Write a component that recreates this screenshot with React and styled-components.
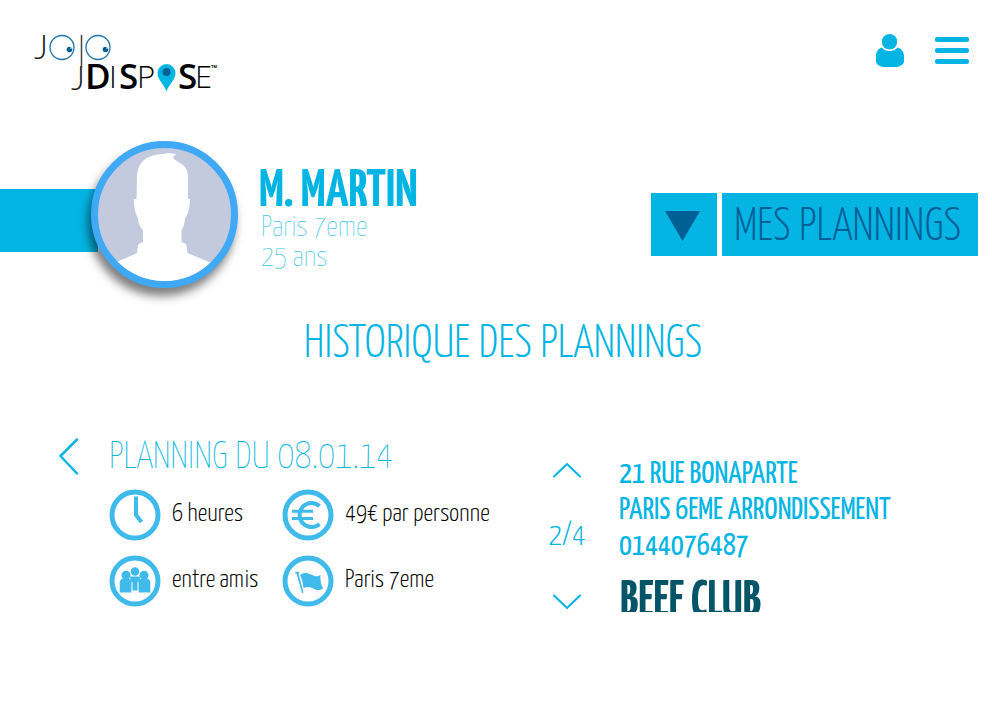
import React from 'react';
import styled, { createGlobalStyle } from 'styled-components';

const cyan = '#04b5e4';
const navy = '#005f95';
const iconBlue = '#40baeb';

const GlobalStyle = createGlobalStyle`
  *, *::before, *::after { box-sizing: border-box; }
  body {
    margin: 0;
    background: #fff;
    color: ${cyan};
    font-family: 'Yanone Kaffeesatz', 'Open Sans Condensed', 'Roboto Condensed', sans-serif;
    font-variant-numeric: oldstyle-nums;
  }
  h1, h2, h3, p, ul { margin: 0; padding: 0; }
  button { border: 0; padding: 0; background: none; font: inherit; color: inherit; cursor: pointer; }
  svg { display: block; }
`;

const Page = styled.div`
  min-height: 100vh;
  overflow: hidden;
`;

const Header = styled.header`
  display: flex;
  justify-content: space-between;
  align-items: flex-start;
  padding: 20px 23px 33px 28px;
`;

const HomeLink = styled.a`
  display: block;
`;

const Actions = styled.nav`
  display: flex;
  gap: 31px;
  padding-top: 14px;
`;

const IconButton = styled.button`
  display: grid;
  place-items: center;
`;

const Profile = styled.section`
  display: flex;
  align-items: center;
`;

const Ribbon = styled.div`
  width: 98px;
  height: 63px;
  margin-top: 12px;
  background: ${cyan};
`;

const Avatar = styled.div`
  flex: none;
  width: 147px;
  height: 147px;
  margin-left: -7px;
  border: 7px solid #3fa9f5;
  border-radius: 50%;
  overflow: hidden;
  background: #c4cade;
`;

const AvatarShadow = styled.div`
  display: flex;
  align-items: center;
  filter: drop-shadow(-3px 8px 5px rgba(0, 0, 0, 0.5));
`;

const Identity = styled.div`
  flex: 1;
  margin-left: 21px;
  padding-top: 14px;
`;

const Name = styled.h1`
  font-size: 52px;
  font-weight: 700;
  line-height: 44px;
`;

const Detail = styled.p`
  padding-left: 2px;
  color: #3cc6ea;
  font-size: 29px;
  font-weight: 200;
  line-height: 30px;
`;

const MenuPicker = styled.div`
  display: flex;
  gap: 5px;
  margin: 20px 14px 0 0;
`;

const PickerButton = styled.button`
  display: grid;
  place-items: center;
  height: 63px;
  padding: ${(p) => (p.$icon ? '2px 16px 0 14px' : '4px 17px 0 12px')};
  background: ${cyan};
  color: ${navy};
  font-size: 47px;
  font-weight: 300;
  line-height: 58px;
  white-space: nowrap;
`;

const Title = styled.h2`
  margin-top: 31px;
  padding-left: 14px;
  font-size: 47px;
  font-weight: 300;
  line-height: 50px;
  text-align: center;
`;

const Board = styled.main`
  display: grid;
  grid-template-columns: 490px 1fr;
  padding: 62px 58px 0;
`;

const Planning = styled.section`
  display: grid;
  grid-template-columns: 51px 1fr;
`;

const PreviousButton = styled.button`
  align-self: start;
  margin-top: 7px;
`;

const PlanningTitle = styled.h3`
  padding-top: 3px;
  font-size: 38px;
  font-weight: 200;
  line-height: 48px;
`;

const Facts = styled.ul`
  display: grid;
  grid-template-columns: 173px 1fr;
  row-gap: 14px;
  margin-top: 7px;
  list-style: none;
`;

const Fact = styled.li`
  display: flex;
  align-items: center;
  gap: 11px;
  color: #000;
  font-size: 25px;
  font-weight: 300;
  line-height: 52px;
  white-space: nowrap;
`;

const Venues = styled.section`
  display: grid;
  grid-template-columns: 38px 1fr;
  column-gap: 33px;
  margin-top: 26px;
  height: 155px;
`;

const Pager = styled.div`
  display: flex;
  flex-direction: column;
  justify-content: space-between;
  align-items: center;
  padding: 5px 0 2px;
  font-size: 32px;
  font-weight: 300;
  line-height: 34px;
`;

const VenueList = styled.div`
  overflow: hidden;
  white-space: nowrap;
`;

const Address = styled.p`
  font-size: 31px;
  font-weight: 400;
  line-height: 36px;
`;

const VenueName = styled.h3`
  margin-top: 10px;
  padding-left: 1px;
  color: #045568;
  font-size: 51px;
  font-weight: 700;
  line-height: 56px;
`;

function Logo() {
  return (
    <svg width="200" height="88" viewBox="28 20 200 88" role="img" aria-label="JOJO DISPOSE">
      <g fontFamily="Lato, sans-serif" fontWeight="300" fontSize="34" fill="#222">
        <text x="34" y="59">J</text>
        <text x="71" y="90">J</text>
      </g>
      <path d="M81.500 35V68" stroke="#444" strokeWidth="1.500" />
      <g fill="none" stroke="#1c75a8" strokeWidth="1.3">
        <circle cx="62" cy="47.5" r="12" />
        <circle cx="98" cy="47.5" r="12" />
      </g>
      <g fill={navy}>
        <circle cx="69.5" cy="49.5" r="2.8" />
        <circle cx="105.5" cy="49.5" r="2.8" />
      </g>
      <g fill="#fff">
        <circle cx="71" cy="48" r="0.8" />
        <circle cx="107" cy="48" r="0.8" />
      </g>
      <g fontFamily="'Open Sans', sans-serif" fontSize="35" fill="#000">
        <text x="85" y="89" fontWeight="600">D</text>
        <text x="109" y="88" fontWeight="300" fontSize="31">I</text>
        <text x="119" y="89" fontWeight="600">S</text>
        <text x="137" y="88" fontWeight="300" fontSize="31">P</text>
        <text x="178" y="89" fontWeight="600">S</text>
        <text x="195" y="88" fontWeight="300" fontSize="31">E</text>
        <text x="211" y="68" fontWeight="700" fontSize="4">TM</text>
      </g>
      <path d="M166.500 91.500C164 84 157.500 80 157.500 73A9 9 0 0 1 175.500 73C175.500 80 169 84 166.500 91.500Z" fill={cyan} />
      <circle cx="166.500" cy="72" r="4" fill={navy} />
    </svg>
  );
}

function UserIcon() {
  return (
    <svg width="28" height="34" viewBox="0 0 28 34" fill={cyan} aria-hidden="true">
      <circle cx="13.500" cy="7.700" r="7.700" />
      <path d="M6 13.500C9 18.200 18 18.200 21.500 13.500C25.500 14.500 28 18 28 22V27C28 31 23 33 19 33H9C5 33 0 31 0 27V22C0 18 2 14.500 6 13.500Z" />
    </svg>
  );
}

function BarsIcon() {
  return (
    <svg width="34" height="28" viewBox="0 0 34 28" fill={cyan} aria-hidden="true">
      <rect y="0" width="34" height="5" rx="2" />
      <rect y="11" width="34" height="5" rx="2" />
      <rect y="22" width="34" height="5" rx="2" />
    </svg>
  );
}

function Silhouette() {
  return (
    <svg width="133" height="133" viewBox="98 148 133 133" fill="#fff" aria-hidden="true">
      <path d="M137 175Q138 163 147 158Q155 154 163 154L168 153L176 154L173 157L174 159L183 165Q188 169 188 177V199H190C190 207 188 215 185 218Q184.500 226 181.500 230V242L186 244Q187 248 187.500 253L209 262L235 275V290H90V275L117 262Q135 254 137 253Q137 248 138.500 244L143 242V230Q138.500 226 138 218C135 213 134 207 134 199H136.500Z" />
    </svg>
  );
}

function Chevron({ direction }) {
  const shapes = {
    left: { w: 20, h: 38, d: 'M19 1.500L2.500 18L19 35.500', s: 2.5 },
    up: { w: 28, h: 16, d: 'M1 14.500L14 2L27 14.500', s: 2 },
    down: { w: 28, h: 16, d: 'M1 1.500L14 14L27 1.500', s: 2 },
  };
  const { w, h, d, s } = shapes[direction];
  return (
    <svg width={w} height={h} viewBox={`0 0 ${w} ${h}`} fill="none" stroke={cyan} strokeWidth={s} aria-hidden="true">
      <path d={d} strokeLinejoin="round" strokeLinecap="round" />
    </svg>
  );
}

const drawings = {
  clock: <path d="M1-18.500V0L6.500 7" fill="none" stroke={iconBlue} strokeWidth="4" />,
  euro: (
    <g fill="none" stroke={iconBlue}>
      <path d="M11.500-9A12 12 0 1 0 11.500 9" strokeWidth="4" />
      <path d="M-16-3.700H5M-16 3.500H5" strokeWidth="3" />
    </g>
  ),
  friends: (
    <g fill={iconBlue}>
      <circle cx="0" cy="-9.500" r="4.300" />
      <path d="M-5-4.500H5L4 9.500H-3.500Z" />
      <path d="M-15.300 11.500V2Q-15.300-2.500-11-2.500H-8Q-3.500-2.500-3.500 2V11.500ZM15.300 11.500V2Q15.300-2.500 11-2.500H8Q3.500-2.500 3.500 2V11.500Z" />
      <path d="M-3 1V11.500M3 1V11.500" stroke="#fff" strokeWidth="1" />
      <circle cx="-9" cy="-5.700" r="4.500" />
      <circle cx="9" cy="-5.700" r="4.500" />
    </g>
  ),
  flag: (
    <g fill={iconBlue}>
      <path d="M-13-9L-10-9.500L-8.500-8.500L-9.500-7.500L-4.500 11.500L-6 12L-11.500-7.500L-12.500-7.500Z" />
      <path d="M-8-6C-4-9-1-8.500 3-6.500C7-4.500 9-4 12.500-6C12-1 13 4 15 7.500C11 10.500 8 9 4 7C1 5.500-1 5.500-4.500 7C-5 2-6-2-8-6Z" />
    </g>
  ),
};

function FactIcon({ name }) {
  return (
    <svg width="52" height="52" viewBox="-26 -26 52 52" aria-hidden="true">
      <circle r="23" fill="none" stroke={iconBlue} strokeWidth="5" />
      {drawings[name]}
    </svg>
  );
}

const facts = [
  { icon: 'clock', text: '6 heures' },
  { icon: 'euro', text: '49€ par personne' },
  { icon: 'friends', text: 'entre amis' },
  { icon: 'flag', text: 'Paris 7eme' },
];

const address = ['21 RUE BONAPARTE', 'PARIS 6EME ARRONDISSEMENT', '0144076487'];

export default function App() {
  return (
    <Page>
      <GlobalStyle />
      <Header>
        <HomeLink href="#" aria-label="JOJO DISPOSE">
          <Logo />
        </HomeLink>
        <Actions>
          <IconButton aria-label="Profil"><UserIcon /></IconButton>
          <IconButton aria-label="Menu"><BarsIcon /></IconButton>
        </Actions>
      </Header>
      <Profile>
        <Ribbon />
        <AvatarShadow>
          <Avatar><Silhouette /></Avatar>
        </AvatarShadow>
        <Identity>
          <Name>M. MARTIN</Name>
          <Detail>Paris 7eme</Detail>
          <Detail>25 ans</Detail>
        </Identity>
        <MenuPicker>
          <PickerButton $icon aria-label="Ouvrir la liste">
            <svg width="36" height="30" viewBox="0 0 36 30" fill={navy} aria-hidden="true">
              <path d="M0 0H35L17.500 30Z" />
            </svg>
          </PickerButton>
          <PickerButton>MES PLANNINGS</PickerButton>
        </MenuPicker>
      </Profile>
      <Title>HISTORIQUE DES PLANNINGS</Title>
      <Board>
        <Planning>
          <PreviousButton aria-label="Planning précédent"><Chevron direction="left" /></PreviousButton>
          <div>
            <PlanningTitle>PLANNING DU 08.01.14</PlanningTitle>
            <Facts>
              {facts.map((fact) => (
                <Fact key={fact.icon}>
                  <FactIcon name={fact.icon} />
                  {fact.text}
                </Fact>
              ))}
            </Facts>
          </div>
        </Planning>
        <Venues>
          <Pager>
            <IconButton aria-label="Adresse précédente"><Chevron direction="up" /></IconButton>
            <span>2/4</span>
            <IconButton aria-label="Adresse suivante"><Chevron direction="down" /></IconButton>
          </Pager>
          <VenueList>
            {address.map((line) => <Address key={line}>{line}</Address>)}
            <VenueName>BEEF CLUB</VenueName>
          </VenueList>
        </Venues>
      </Board>
    </Page>
  );
}
